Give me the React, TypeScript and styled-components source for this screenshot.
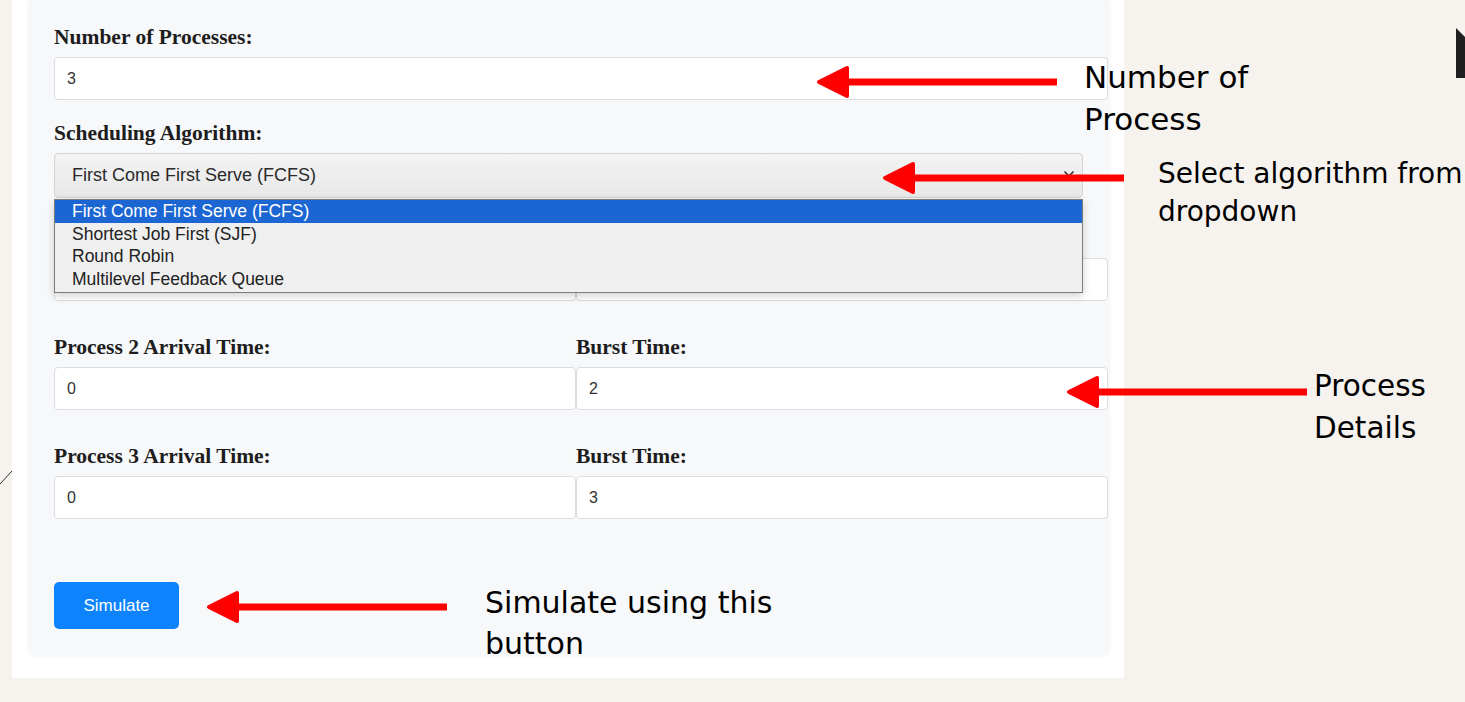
import React from "react";
import styled, { createGlobalStyle } from "styled-components";

const Global = createGlobalStyle`
  html, body { margin: 0; padding: 0; background: #f6f3ee; overflow: hidden; }
  * { box-sizing: border-box; }
`;

const Slide = styled.div`
  position: relative;
  width: 1465px;
  height: 702px;
  overflow: hidden;
  background: #f6f3ee;
`;

const Frame = styled.div`
  margin-left: 12px;
  width: 1112px;
  height: 678px;
  background: #ffffff;
  padding: 0 14px 22px 16px;
`;

const Panel = styled.div`
  height: 656px;
  background: #f7f8fa;
  border-radius: 0 0 8px 8px;
  box-shadow: 0 1px 3px rgba(0, 0, 0, 0.04);
  padding: 26px 2px 27px 26px;
  display: flex;
  flex-direction: column;
`;

const Field = styled.div<{ $mt?: number }>`
  display: flex;
  flex-direction: column;
  margin-top: ${(p) => p.$mt ?? 0}px;
`;

const Label = styled.label<{ $covered?: boolean }>`
  display: block;
  font-family: "Liberation Serif", "Times New Roman", serif;
  font-weight: 700;
  font-size: 21.5px;
  line-height: 23px;
  height: 23px;
  color: #1d1d1d;
  margin-bottom: 8px;
  white-space: nowrap;
  visibility: ${(p) => (p.$covered ? "hidden" : "visible")};
`;

const TextInput = styled.div`
  height: 43px;
  width: 100%;
  background: #ffffff;
  border: 1px solid #dcdde0;
  border-radius: 4px;
  padding-left: 12px;
  display: flex;
  align-items: center;
  font-family: "Liberation Sans", Arial, sans-serif;
  font-size: 16px;
  color: #333;
`;

const SelectWrap = styled.div`
  position: relative;
  width: 1029px;
  z-index: 2;
`;

const SelectBox = styled.div`
  height: 45px;
  border: 1px solid #d3d3d3;
  border-radius: 4px;
  background: linear-gradient(#f3f3f3, #e8e8e8);
  padding-left: 17px;
  display: flex;
  align-items: center;
  justify-content: space-between;
  font-family: "Liberation Sans", Arial, sans-serif;
  font-size: 18px;
  color: #2a2a2a;
`;

const Chevron = styled.svg`
  width: 12px;
  height: 8px;
  margin-right: 7px;
  margin-top: -4px;
`;

const Dropdown = styled.div`
  position: absolute;
  left: 0;
  top: 46px;
  width: 1029px;
  background: #efefef;
  border: 1px solid #7c7c7c;
  box-shadow: 0 3px 8px rgba(0, 0, 0, 0.18);
  padding: 0 0 2px 0;
`;

const Option = styled.div<{ $active?: boolean }>`
  height: 22.5px;
  line-height: 22.5px;
  padding-left: 17px;
  font-family: "Liberation Sans", Arial, sans-serif;
  font-size: 17.5px;
  background: ${(p) => (p.$active ? "#1b66d2" : "transparent")};
  color: ${(p) => (p.$active ? "#ffffff" : "#222")};
`;

const ProcessRow = styled.div<{ $mt: number }>`
  display: grid;
  grid-template-columns: 522px 1fr;
  margin-top: ${(p) => p.$mt}px;
`;

const Cell = styled.div`
  display: flex;
  flex-direction: column;
`;

const SimButton = styled.button`
  margin-top: 63px;
  width: 125px;
  height: 47px;
  border: none;
  border-radius: 5px;
  background: #0d84fd;
  color: #ffffff;
  font-family: "Liberation Sans", Arial, sans-serif;
  font-size: 17px;
  padding: 0;
  cursor: pointer;
`;

const Note = styled.div<{ $left: number; $top: number; $size: number; $lh: number }>`
  position: absolute;
  left: ${(p) => p.$left}px;
  top: ${(p) => p.$top}px;
  font-family: "DejaVu Sans", Tahoma, Verdana, sans-serif;
  font-size: ${(p) => p.$size}px;
  line-height: ${(p) => p.$lh}px;
  color: #000;
  white-space: nowrap;
  z-index: 5;
`;

const ArrowSvg = styled.svg<{ $left: number; $top: number }>`
  position: absolute;
  left: ${(p) => p.$left}px;
  top: ${(p) => p.$top}px;
  height: 36px;
  z-index: 6;
  overflow: visible;
`;

const Corner = styled.svg`
  position: absolute;
  left: 1456px;
  top: 28px;
  width: 9px;
  height: 50px;
`;

const Scribble = styled.svg`
  position: absolute;
  left: 0;
  top: 468px;
  width: 14px;
  height: 18px;
`;

function Arrow({ tipX, y, endX }: { tipX: number; y: number; endX: number }) {
  const w = endX - tipX + 2;
  return (
    <ArrowSvg $left={tipX - 2} $top={y - 18} width={w} viewBox={`0 0 ${w} 36`}>
      <rect x={28} y={14.5} width={w - 28} height={7} fill="#ff0000" />
      <polygon
        points="3,18 31,4 31,32"
        fill="#ff0000"
        stroke="#ff0000"
        strokeWidth={4}
        strokeLinejoin="round"
      />
    </ArrowSvg>
  );
}

const processes = [
  { n: 1, arrival: "", burst: "" },
  { n: 2, arrival: "0", burst: "2" },
  { n: 3, arrival: "0", burst: "3" },
];

const options = [
  "First Come First Serve (FCFS)",
  "Shortest Job First (SJF)",
  "Round Robin",
  "Multilevel Feedback Queue",
];

export default function App() {
  return (
    <>
      <Global />
      <Slide>
        <Frame>
          <Panel>
            <Field>
              <Label>Number of Processes:</Label>
              <TextInput>3</TextInput>
            </Field>
            <Field $mt={22}>
              <Label>Scheduling Algorithm:</Label>
              <SelectWrap>
                <SelectBox>
                  <span>First Come First Serve (FCFS)</span>
                  <Chevron viewBox="0 0 12 8">
                    <path d="M1.5 1.5 L6 6 L10.5 1.5" fill="none" stroke="#333" strokeWidth={1.6} />
                  </Chevron>
                </SelectBox>
                <Dropdown>
                  {options.map((o, i) => (
                    <Option key={o} $active={i === 0}>
                      {o}
                    </Option>
                  ))}
                </Dropdown>
              </SelectWrap>
            </Field>
            {processes.map((p, i) => (
              <ProcessRow key={p.n} $mt={i === 0 ? 29 : 35}>
                <Cell>
                  <Label $covered={i === 0}>Process {p.n} Arrival Time:</Label>
                  <TextInput>{p.arrival}</TextInput>
                </Cell>
                <Cell>
                  <Label $covered={i === 0}>Burst Time:</Label>
                  <TextInput>{p.burst}</TextInput>
                </Cell>
              </ProcessRow>
            ))}
            <div>
              <SimButton>Simulate</SimButton>
            </div>
          </Panel>
        </Frame>

        <Arrow tipX={818} y={82} endX={1057} />
        <Arrow tipX={884} y={178} endX={1124} />
        <Arrow tipX={1068} y={392} endX={1307} />
        <Arrow tipX={208} y={607} endX={447} />

        <Note $left={1084} $top={56} $size={31} $lh={42}>
          Number of
          <br />
          Process
        </Note>
        <Note $left={1158} $top={155} $size={28} $lh={38}>
          Select algorithm from
          <br />
          dropdown
        </Note>
        <Note $left={1314} $top={366} $size={29.5} $lh={41.5}>
          Process
          <br />
          Details
        </Note>
        <Note $left={485} $top={582} $size={30} $lh={41}>
          Simulate using this
          <br />
          button
        </Note>

        <Corner viewBox="0 0 9 50">
          <polygon points="0,0 9,9 9,50 0,50" fill="#1f1f1f" />
        </Corner>
        <Scribble viewBox="0 0 14 18">
          <line x1="0" y1="16" x2="12" y2="3" stroke="#333" strokeWidth={1} />
        </Scribble>
      </Slide>
    </>
  );
}
